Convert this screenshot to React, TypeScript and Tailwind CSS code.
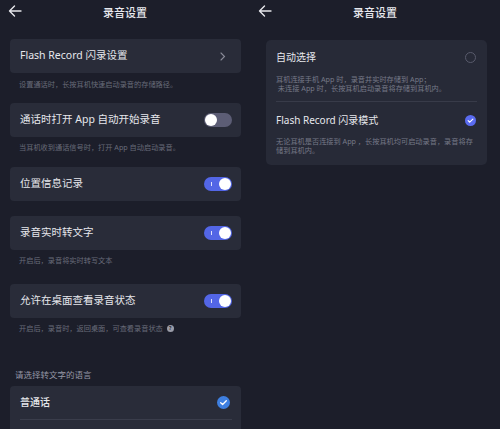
import React from 'react';

const font = "font-['Noto_Sans','Noto_Sans_CJK_SC',sans-serif]";

function BackArrow() {
  return (
    <svg width="14" height="12" viewBox="0 0 14 12" fill="none">
      <path d="M13 6H1.5M6.5 1L1.5 6l5 5" stroke="#e6e7ec" strokeWidth="1.4" strokeLinecap="round" strokeLinejoin="round" />
    </svg>
  );
}

function Header() {
  return (
    <div className="relative h-6 shrink-0 flex items-center justify-center">
      <div className="absolute left-[8px] top-[5px]">
        <BackArrow />
      </div>
      <span className="text-[11px] leading-none text-[#e8e9ee] font-medium">录音设置</span>
    </div>
  );
}

function Toggle({ on }: { on: boolean }) {
  return on ? (
    <div className="relative w-[28px] h-[14px] rounded-full bg-[#5366e6] flex items-center justify-end pr-[1px]">
      <span className="absolute left-[7px] top-[5px] w-[1px] h-[4px] bg-white/80" />
      <span className="w-[12px] h-[12px] rounded-full bg-white" />
    </div>
  ) : (
    <div className="w-[28px] h-[14px] rounded-full bg-[#5c5d75] flex items-center pl-[1px]">
      <span className="w-[12px] h-[12px] rounded-full bg-white" />
    </div>
  );
}

function CheckCircle({ size, color }: { size: number; color: string }) {
  return (
    <svg width={size} height={size} viewBox="0 0 12 12">
      <circle cx="6" cy="6" r="6" fill={color} />
      <path d="M3.4 6.2l1.8 1.7 3.4-3.5" stroke="#fff" strokeWidth="1.2" fill="none" strokeLinecap="round" strokeLinejoin="round" />
    </svg>
  );
}

function Card({ label, right }: { label: string; right: React.ReactNode }) {
  return (
    <div className="h-[34px] rounded-[4px] bg-[#292c39] flex items-center justify-between pl-[10px] pr-[9px]">
      <span className="text-[10.5px] text-[#e6e7ec]">{label}</span>
      {right}
    </div>
  );
}

function Desc({ children, className = '' }: { children: React.ReactNode; className?: string }) {
  return <p className={`text-[7.2px] leading-[10px] text-[#686b79] pl-[9px] ${className}`}>{children}</p>;
}

function LeftScreen() {
  return (
    <div className="w-[250px] h-[429px] shrink-0 overflow-hidden">
      <Header />
      <div className="pl-[10px] pr-[9px]">
        <div className="pt-[15px]">
          <Card
            label="Flash Record 闪录设置"
            right={
              <svg width="6" height="9" viewBox="0 0 6 9" className="mr-[6px]">
                <path d="M1 1l3.5 3.5L1 8" stroke="#8a8c99" strokeWidth="1.1" fill="none" strokeLinecap="round" />
              </svg>
            }
          />
        </div>
        <Desc className="mt-[6px]">设置通话时，长按耳机快速启动录音的存储路径。</Desc>
        <div className="mt-[14px]">
          <Card label="通话时打开 App 自动开始录音" right={<Toggle on={false} />} />
        </div>
        <Desc className="mt-[5px]">当耳机收到通话信号时，打开 App 自动启动录音。</Desc>
        <div className="mt-[15px]">
          <Card label="位置信息记录" right={<Toggle on />} />
        </div>
        <div className="mt-[15px]">
          <Card label="录音实时转文字" right={<Toggle on />} />
        </div>
        <Desc className="mt-[5px]">开启后，录音将实时转写文本</Desc>
        <div className="mt-[19px]">
          <Card label="允许在桌面查看录音状态" right={<Toggle on />} />
        </div>
        <div className="mt-[5px] flex items-center gap-[4px]">
          <Desc>开启后，录音时，返回桌面，可查看录音状态</Desc>
          <span className="w-[7px] h-[7px] rounded-full bg-[#9a9ca8] flex items-center justify-center text-[5px] leading-none text-[#1d1f2b] font-bold">?</span>
        </div>
        <p className="mt-[36px] text-[8.5px] leading-[12px] text-[#9597a5] pl-[5px]">请选择转文字的语言</p>
        <div className="mt-[5px] rounded-[4px] bg-[#292c39] pl-[10px] pr-[9px]">
          <div className="h-[34px] flex items-center justify-between border-b border-[#3a3d4b]">
            <span className="text-[10px] text-[#e6e7ec] font-medium">普通话</span>
            <span className="mr-[2px]">
              <CheckCircle size={13} color="#3e7fe0" />
            </span>
          </div>
          <div className="h-[20px]" />
        </div>
      </div>
    </div>
  );
}

function RightScreen() {
  return (
    <div className="w-[250px] h-[429px] shrink-0 overflow-hidden">
      <Header />
      <div className="mt-[16px] ml-[16px] mr-[13px] rounded-[5px] bg-[#272a37] pl-[10px] pr-[10px] pt-[11px] pb-[10px]">
        <div className="flex items-center justify-between h-[12px]">
          <span className="text-[10px] text-[#e6e7ec]">自动选择</span>
          <span className="w-[11px] h-[11px] rounded-full border border-[#595b6c] mr-[1px]" />
        </div>
        <p className="mt-[12px] text-[7.2px] leading-[9px] text-[#767987] whitespace-pre">
          {'耳机连接手机 App 时，录音并实时存储到 App；\n 未连接 App 时，长按耳机启动录音将存储到耳机内。'}
        </p>
        <div className="mt-[8px] h-px bg-[#383b49]" />
        <div className="mt-[12px] flex items-center justify-between h-[12px]">
          <span className="text-[10px] text-[#e6e7ec]">Flash Record 闪录模式</span>
          <span className="mr-[1px]">
            <CheckCircle size={11} color="#5a6bf0" />
          </span>
        </div>
        <p className="mt-[11px] text-[7.2px] leading-[9px] text-[#767987]">
          无论耳机是否连接到 App ，长按耳机均可启动录音，录音将存储到耳机内。
        </p>
      </div>
    </div>
  );
}

export default function App() {
  return (
    <div className={`w-[500px] h-[429px] bg-[#1c1e2a] flex ${font}`}>
      <LeftScreen />
      <RightScreen />
    </div>
  );
}
